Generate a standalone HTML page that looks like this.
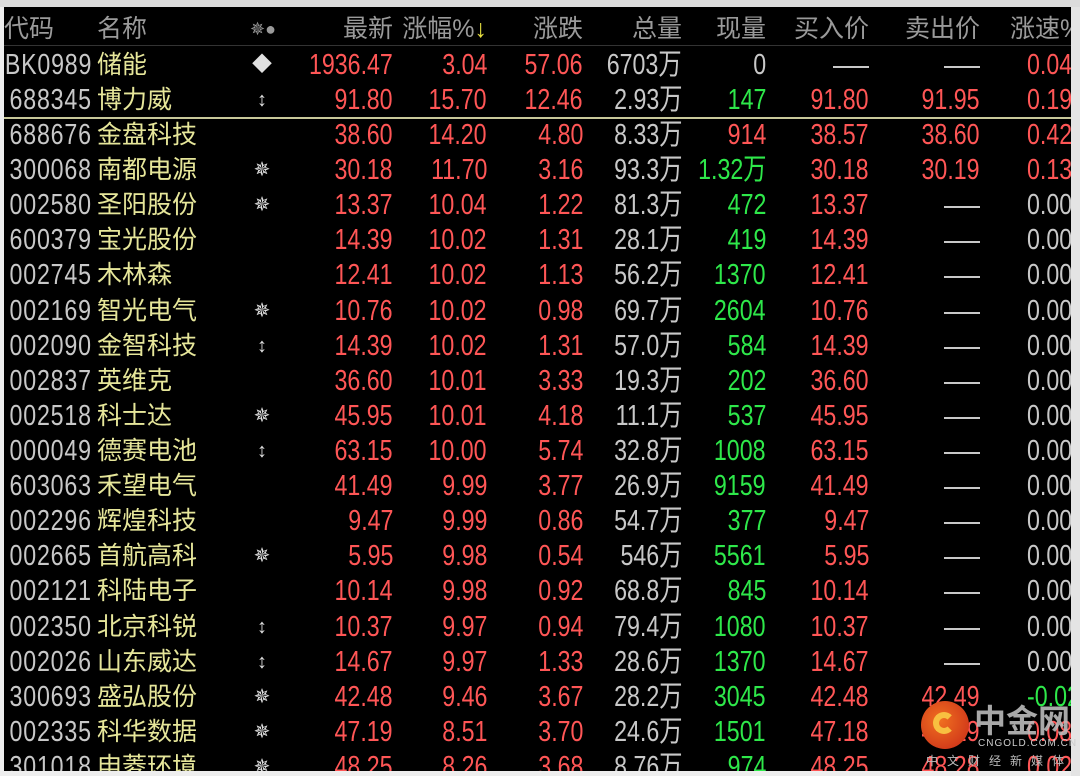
<!DOCTYPE html>
<html><head><meta charset="utf-8"><style>
*{margin:0;padding:0;box-sizing:border-box}
body{width:1080px;height:776px;background:#eeeeee;position:relative;overflow:hidden;font-family:"Liberation Sans","Noto Sans CJK SC",sans-serif;font-size:24px}
#b{position:absolute;left:4px;top:7px;width:1067px;height:764px;background:#000;overflow:hidden}
.r{position:absolute;left:-4px;width:1080px;height:35px;line-height:35px;white-space:nowrap}
.r span{position:absolute;top:0}
.n{font-size:29px;transform:scaleX(.8);transform-origin:100% 50%}
.cd{right:988px;color:#c8c8c8;letter-spacing:1px}
.nm{left:97px;color:#e6e69a;font-size:25px}
.ic{left:250px;width:24px;text-align:center;color:#e0e0e0;font-size:20px}
.a{right:687px}.b{right:593px}.c{right:497px}.d{right:398px;color:#c8c8c8}.e{right:314px}.f{right:211px}.g{right:100px}.h{left:1027px;transform-origin:0 50%!important}
.R{color:#ff5656}.G{color:#2ee84a}.W{color:#c8c8c8}
.hd span{color:#9a9a9a;font-size:25px}
.dash{display:inline-block;width:36px;height:2px;background:#c8c8c8;vertical-align:middle}
</style></head><body>
<div style="position:absolute;left:0;top:0;width:1080px;height:7px;background:#dcdcdc"></div>
<div style="position:absolute;left:1071px;top:7px;width:9px;height:769px;background:#e4e4e4"></div>
<div id="b">
<div class="r hd" style="top:5px"><span style="left:4px">代码</span><span style="left:97px">名称</span><span style="left:250px;font-size:18px">✵●</span><span class="a">最新</span><span class="b">涨幅%<b style="color:#e8e040;font-weight:normal">↓</b></span><span class="c">涨跌</span><span class="d" style="color:#9a9a9a">总量</span><span class="e">现量</span><span class="f">买入价</span><span class="g">卖出价</span><span style="left:1010px">涨速%</span></div>
<div style="position:absolute;left:0;top:38px;width:1067px;height:1px;background:#333"></div>
<div style="position:absolute;left:0;top:110px;width:1067px;height:2px;background:#c8c89a"></div>

<div class="r" style="top:41px"><span class="cd n">BK0989</span><span class="nm">储能</span><span class="ic">◆</span><span class="a n R">1936.47</span><span class="b n R">3.04</span><span class="c n R">57.06</span><span class="d n">6703万</span><span class="e n W">0</span><span class="f"><i class="dash"></i></span><span class="g"><i class="dash"></i></span><span class="h n R">0.04</span></div>
<div class="r" style="top:76px"><span class="cd n">688345</span><span class="nm">博力威</span><span class="ic">↕</span><span class="a n R">91.80</span><span class="b n R">15.70</span><span class="c n R">12.46</span><span class="d n">2.93万</span><span class="e n G">147</span><span class="f n R">91.80</span><span class="g n R">91.95</span><span class="h n R">0.19</span></div>
<div class="r" style="top:111px"><span class="cd n">688676</span><span class="nm">金盘科技</span><span class="a n R">38.60</span><span class="b n R">14.20</span><span class="c n R">4.80</span><span class="d n">8.33万</span><span class="e n R">914</span><span class="f n R">38.57</span><span class="g n R">38.60</span><span class="h n R">0.42</span></div>
<div class="r" style="top:146px"><span class="cd n">300068</span><span class="nm">南都电源</span><span class="ic">✵</span><span class="a n R">30.18</span><span class="b n R">11.70</span><span class="c n R">3.16</span><span class="d n">93.3万</span><span class="e n G">1.32万</span><span class="f n R">30.18</span><span class="g n R">30.19</span><span class="h n R">0.13</span></div>
<div class="r" style="top:181px"><span class="cd n">002580</span><span class="nm">圣阳股份</span><span class="ic">✵</span><span class="a n R">13.37</span><span class="b n R">10.04</span><span class="c n R">1.22</span><span class="d n">81.3万</span><span class="e n G">472</span><span class="f n R">13.37</span><span class="g"><i class="dash"></i></span><span class="h n W">0.00</span></div>
<div class="r" style="top:216px"><span class="cd n">600379</span><span class="nm">宝光股份</span><span class="a n R">14.39</span><span class="b n R">10.02</span><span class="c n R">1.31</span><span class="d n">28.1万</span><span class="e n G">419</span><span class="f n R">14.39</span><span class="g"><i class="dash"></i></span><span class="h n W">0.00</span></div>
<div class="r" style="top:251px"><span class="cd n">002745</span><span class="nm">木林森</span><span class="a n R">12.41</span><span class="b n R">10.02</span><span class="c n R">1.13</span><span class="d n">56.2万</span><span class="e n G">1370</span><span class="f n R">12.41</span><span class="g"><i class="dash"></i></span><span class="h n W">0.00</span></div>
<div class="r" style="top:287px"><span class="cd n">002169</span><span class="nm">智光电气</span><span class="ic">✵</span><span class="a n R">10.76</span><span class="b n R">10.02</span><span class="c n R">0.98</span><span class="d n">69.7万</span><span class="e n G">2604</span><span class="f n R">10.76</span><span class="g"><i class="dash"></i></span><span class="h n W">0.00</span></div>
<div class="r" style="top:322px"><span class="cd n">002090</span><span class="nm">金智科技</span><span class="ic">↕</span><span class="a n R">14.39</span><span class="b n R">10.02</span><span class="c n R">1.31</span><span class="d n">57.0万</span><span class="e n G">584</span><span class="f n R">14.39</span><span class="g"><i class="dash"></i></span><span class="h n W">0.00</span></div>
<div class="r" style="top:357px"><span class="cd n">002837</span><span class="nm">英维克</span><span class="a n R">36.60</span><span class="b n R">10.01</span><span class="c n R">3.33</span><span class="d n">19.3万</span><span class="e n G">202</span><span class="f n R">36.60</span><span class="g"><i class="dash"></i></span><span class="h n W">0.00</span></div>
<div class="r" style="top:392px"><span class="cd n">002518</span><span class="nm">科士达</span><span class="ic">✵</span><span class="a n R">45.95</span><span class="b n R">10.01</span><span class="c n R">4.18</span><span class="d n">11.1万</span><span class="e n G">537</span><span class="f n R">45.95</span><span class="g"><i class="dash"></i></span><span class="h n W">0.00</span></div>
<div class="r" style="top:427px"><span class="cd n">000049</span><span class="nm">德赛电池</span><span class="ic">↕</span><span class="a n R">63.15</span><span class="b n R">10.00</span><span class="c n R">5.74</span><span class="d n">32.8万</span><span class="e n G">1008</span><span class="f n R">63.15</span><span class="g"><i class="dash"></i></span><span class="h n W">0.00</span></div>
<div class="r" style="top:462px"><span class="cd n">603063</span><span class="nm">禾望电气</span><span class="a n R">41.49</span><span class="b n R">9.99</span><span class="c n R">3.77</span><span class="d n">26.9万</span><span class="e n G">9159</span><span class="f n R">41.49</span><span class="g"><i class="dash"></i></span><span class="h n W">0.00</span></div>
<div class="r" style="top:497px"><span class="cd n">002296</span><span class="nm">辉煌科技</span><span class="a n R">9.47</span><span class="b n R">9.99</span><span class="c n R">0.86</span><span class="d n">54.7万</span><span class="e n G">377</span><span class="f n R">9.47</span><span class="g"><i class="dash"></i></span><span class="h n W">0.00</span></div>
<div class="r" style="top:532px"><span class="cd n">002665</span><span class="nm">首航高科</span><span class="ic">✵</span><span class="a n R">5.95</span><span class="b n R">9.98</span><span class="c n R">0.54</span><span class="d n">546万</span><span class="e n G">5561</span><span class="f n R">5.95</span><span class="g"><i class="dash"></i></span><span class="h n W">0.00</span></div>
<div class="r" style="top:567px"><span class="cd n">002121</span><span class="nm">科陆电子</span><span class="a n R">10.14</span><span class="b n R">9.98</span><span class="c n R">0.92</span><span class="d n">68.8万</span><span class="e n G">845</span><span class="f n R">10.14</span><span class="g"><i class="dash"></i></span><span class="h n W">0.00</span></div>
<div class="r" style="top:603px"><span class="cd n">002350</span><span class="nm">北京科锐</span><span class="ic">↕</span><span class="a n R">10.37</span><span class="b n R">9.97</span><span class="c n R">0.94</span><span class="d n">79.4万</span><span class="e n G">1080</span><span class="f n R">10.37</span><span class="g"><i class="dash"></i></span><span class="h n W">0.00</span></div>
<div class="r" style="top:638px"><span class="cd n">002026</span><span class="nm">山东威达</span><span class="ic">↕</span><span class="a n R">14.67</span><span class="b n R">9.97</span><span class="c n R">1.33</span><span class="d n">28.6万</span><span class="e n G">1370</span><span class="f n R">14.67</span><span class="g"><i class="dash"></i></span><span class="h n W">0.00</span></div>
<div class="r" style="top:673px"><span class="cd n">300693</span><span class="nm">盛弘股份</span><span class="ic">✵</span><span class="a n R">42.48</span><span class="b n R">9.46</span><span class="c n R">3.67</span><span class="d n">28.2万</span><span class="e n G">3045</span><span class="f n R">42.48</span><span class="g n R">42.49</span><span class="h n G">-0.02</span></div>
<div class="r" style="top:708px"><span class="cd n">002335</span><span class="nm">科华数据</span><span class="ic">✵</span><span class="a n R">47.19</span><span class="b n R">8.51</span><span class="c n R">3.70</span><span class="d n">24.6万</span><span class="e n G">1501</span><span class="f n R">47.18</span><span class="g n R">47.19</span><span class="h n R">0.08</span></div>
<div class="r" style="top:743px"><span class="cd n">301018</span><span class="nm">申菱环境</span><span class="ic">✵</span><span class="a n R">48.25</span><span class="b n R">8.26</span><span class="c n R">3.68</span><span class="d n">8.76万</span><span class="e n G">974</span><span class="f n R">48.25</span><span class="g n R">48.28</span><span class="h n R">0.02</span></div>
</div>
<div style="position:absolute;left:921px;top:701px;width:48px;height:48px;border-radius:50%;background:radial-gradient(circle at 40% 40%,#f07020,#c82818)"></div>
<div style="position:absolute;left:933px;top:712px;width:22px;height:22px;border-radius:50%;border:6px solid #f8c040;border-right-color:transparent"></div>
<div style="position:absolute;left:974px;top:700px;color:#bbb;font-size:32px;font-weight:bold;line-height:38px;font-family:'Noto Sans CJK SC',sans-serif;opacity:.9">中金网</div>
<div style="position:absolute;left:978px;top:738px;color:#ccc;font-size:10px;letter-spacing:1px">CNGOLD.COM.CN</div>
<div style="position:absolute;left:926px;top:752px;color:#bbb;font-size:12px;letter-spacing:9px;font-family:'Noto Sans CJK SC',sans-serif">中文财经新媒体</div>
</body></html>
